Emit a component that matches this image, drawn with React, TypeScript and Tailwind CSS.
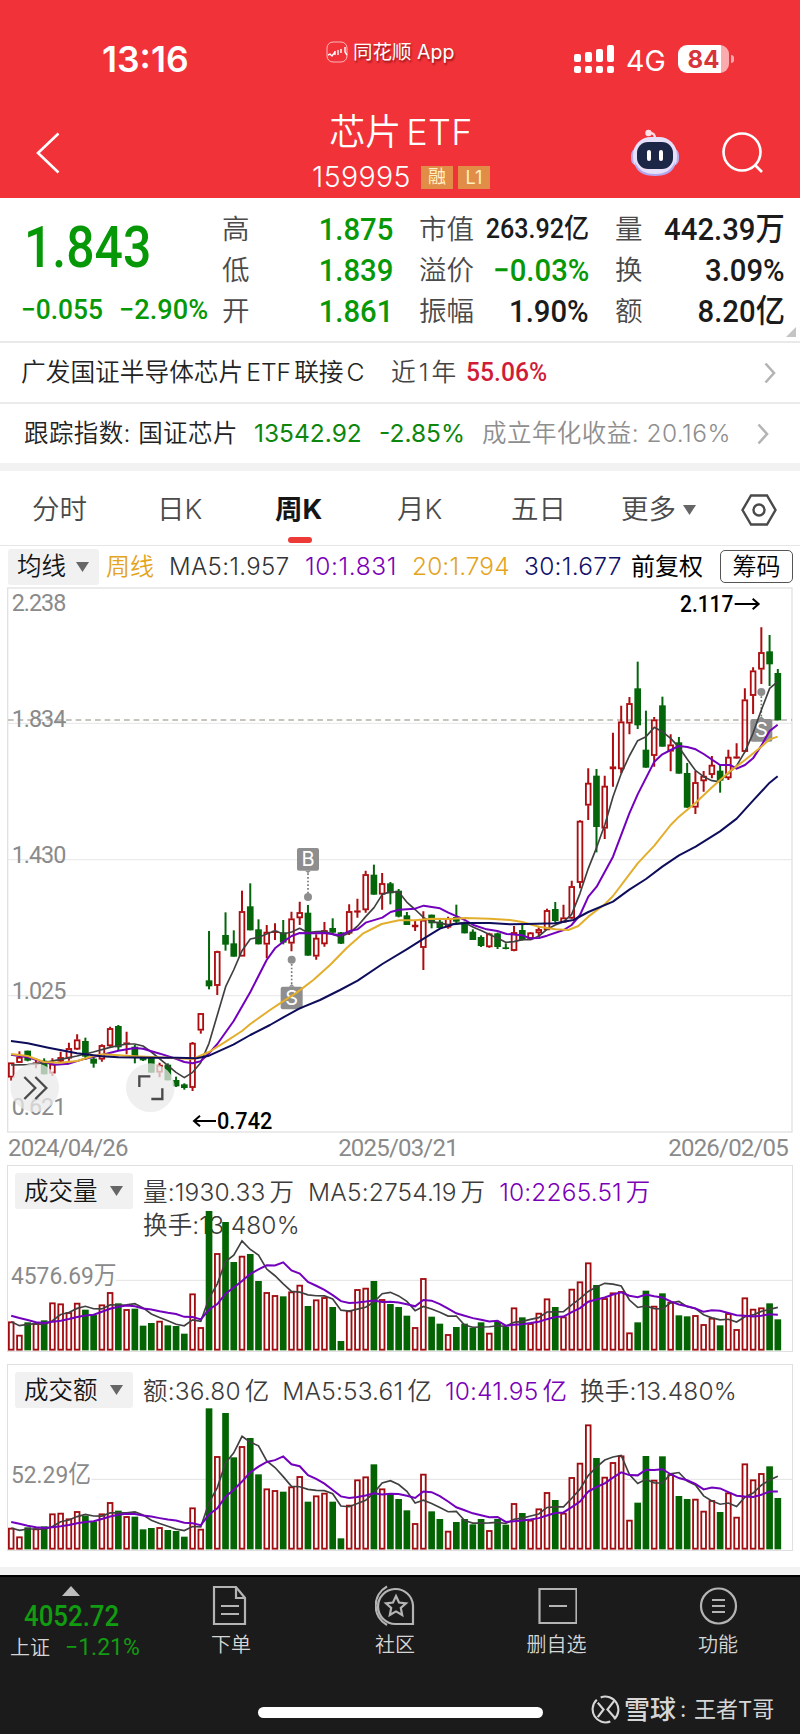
import React from 'react';

type Candle = [high: number, top: number, bottom: number, low: number, up: 0 | 1];

// Plot units are thirds of a pixel; x of the n-th weekly bar.
const barX = (i: number) => 33.6 + i * 24.73;

const CANDLES: Candle[] = [
  [1388, 1388, 1432, 1442, 1], [1354, 1371, 1388, 1388, 1], [1352, 1352, 1382, 1384, 0], [1375, 1388, 1392, 1405, 1],
  [1375, 1382, 1423, 1423, 0], [1375, 1392, 1420, 1428, 1], [1355, 1372, 1384, 1388, 1], [1328, 1345, 1375, 1382, 1],
  [1303, 1319, 1348, 1350, 1], [1313, 1323, 1370, 1380, 0], [1370, 1376, 1391, 1403, 0], [1333, 1336, 1378, 1385, 1],
  [1280, 1285, 1338, 1340, 1], [1275, 1278, 1342, 1352, 0], [1295, 1328, 1333, 1363, 1], [1335, 1340, 1368, 1390, 0],
  [1368, 1372, 1381, 1383, 0], [1372, 1374, 1418, 1418, 0], [1388, 1395, 1417, 1432, 1], [1390, 1394, 1441, 1441, 0],
  [1430, 1440, 1459, 1461, 0], [1450, 1453, 1464, 1469, 0], [1326, 1329, 1463, 1473, 1], [1240, 1240, 1291, 1301, 1],
  [993, 1141, 1159, 1168, 0], [1052, 1054, 1157, 1185, 1], [937, 1005, 1034, 1052, 0], [991, 1030, 1070, 1070, 0],
  [872, 934, 1069, 1069, 1], [850, 919, 991, 991, 0], [958, 988, 1033, 1033, 0], [975, 996, 1033, 1075, 1],
  [970, 993, 997, 1020, 1], [960, 997, 1028, 1033, 0], [935, 956, 1030, 1054, 1], [905, 937, 954, 975, 1],
  [915, 938, 1067, 1067, 0], [1003, 1014, 1069, 1079, 1], [966, 991, 1032, 1040, 1], [955, 984, 998, 1005, 0],
  [996, 997, 1031, 1032, 0], [913, 934, 1000, 1005, 1], [896, 932, 936, 953, 1], [812, 823, 930, 938, 1],
  [794, 824, 884, 884, 0], [819, 850, 883, 929, 1], [846, 850, 880, 913, 0], [867, 872, 950, 952, 0],
  [936, 946, 975, 975, 0], [963, 975, 981, 993, 1], [934, 960, 1043, 1110, 1], [944, 944, 970, 985, 0],
  [954, 965, 984, 986, 0], [950, 955, 982, 986, 1], [914, 951, 965, 970, 0], [965, 968, 1000, 1000, 0],
  [988, 995, 1020, 1020, 0], [1006, 1011, 1038, 1041, 0], [998, 1001, 1041, 1043, 1], [998, 1000, 1041, 1047, 0],
  [1030, 1042, 1047, 1048, 0], [978, 997, 1052, 1054, 1], [972, 990, 1020, 1022, 0], [996, 998, 1016, 1020, 1],
  [982, 988, 999, 1012, 1], [926, 931, 990, 990, 1], [906, 927, 963, 968, 0], [914, 953, 967, 968, 1],
  [842, 859, 955, 957, 1], [661, 663, 848, 865, 1], [505, 549, 616, 660, 1], [507, 527, 681, 757, 0],
  [527, 558, 685, 717, 1], [398, 500, 507, 560, 1], [317, 365, 507, 520, 1], [291, 310, 370, 403, 1],
  [185, 265, 376, 387, 0], [332, 449, 503, 503, 0], [351, 359, 467, 500, 1], [290, 316, 440, 440, 0],
  [403, 434, 454, 514, 1], [411, 427, 521, 521, 0], [489, 519, 623, 623, 0], [513, 547, 622, 642, 1],
  [513, 528, 543, 575, 1], [468, 495, 524, 535, 1], [495, 512, 542, 578, 0], [449, 471, 534, 540, 1],
  [430, 470, 475, 476, 1], [265, 299, 455, 457, 1], [202, 212, 287, 342, 1], [82, 157, 208, 252, 1],
  [105, 154, 193, 258, 0], [207, 219, 361, 361, 0],
];

// Bar tops, measured from the panel's own origin.
const VOLUME = [
  485, 525, 487, 490, 481, 428, 431, 457, 429, 449, 465, 434, 397, 430, 448, 446, 497, 489, 483, 496, 498, 521, 401, 502,
  153, 280, 186, 306, 288, 282, 363, 397, 406, 409, 395, 375, 438, 419, 412, 441, 543, 452, 388, 384, 363, 418, 432, 441,
  467, 502, 355, 470, 491, 523, 501, 491, 503, 487, 519, 486, 500, 443, 472, 490, 459, 416, 441, 470, 387, 365, 308, 375,
  415, 398, 394, 518, 487, 392, 438, 400, 426, 466, 469, 466, 493, 474, 496, 460, 508, 413, 447, 443, 430, 478,
];

const TURNOVER = [
  507, 533, 505, 509, 502, 464, 462, 479, 457, 470, 487, 464, 430, 455, 472, 473, 511, 507, 505, 513, 516, 533, 446, 510,
  148, 292, 162, 295, 262, 237, 346, 389, 394, 398, 383, 352, 428, 410, 402, 428, 538, 438, 362, 353, 316, 389, 405, 420,
  454, 493, 345, 457, 480, 516, 489, 480, 496, 480, 514, 480, 497, 433, 462, 483, 449, 400, 423, 462, 355, 312, 197, 297,
  354, 310, 290, 483, 431, 291, 363, 292, 346, 411, 420, 420, 456, 424, 459, 401, 474, 314, 362, 343, 322, 417,
];

const MA5 =
  '33,1395 83,1394 132,1388 182,1378 231,1368 280,1356 330,1342 380,1332 404,1332 429,1338 454,1356 503,1396 528,1417 553,1433 578,1417 602,1388 627,1330 652,1245 677,1160 701,1110 726,1052 751,1017 776,1012 800,1002 825,992 850,1002 875,996 899,985 924,998 950,995 974,994 998,1003 1020,1010 1047,1000 1073,978 1097,950 1122,923 1147,883 1172,875 1197,877 1222,908 1247,930 1271,953 1295,964 1320,970 1345,974 1370,970 1395,968 1420,982 1445,992 1470,1004 1492,1014 1517,1027 1542,1025 1567,1019 1592,1019 1617,1008 1641,988 1666,975 1691,965 1715,943 1740,880 1765,805 1790,742 1815,673 1839,590 1864,520 1888,468 1913,422 1938,410 1963,382 1987,395 2012,415 2037,442 2062,478 2087,512 2111,530 2136,542 2156,545 2185,520 2210,497 2235,455 2259,400 2284,330 2309,265 2333,245';
const MA10 =
  '33,1364 83,1372 120,1383 165,1394 207,1391 256,1376 305,1365 355,1352 404,1344 429,1346 480,1361 530,1377 553,1386 578,1390 602,1384 627,1360 652,1332 701,1263 751,1176 800,1080 825,1045 850,1025 875,1008 899,999 930,1000 974,999 1020,1006 1047,994 1073,988 1097,968 1147,953 1172,936 1197,929 1245,926 1271,917 1320,925 1345,938 1395,960 1420,975 1460,988 1492,993 1520,1002 1567,1006 1592,1015 1617,1014 1641,1007 1691,990 1715,975 1740,945 1765,890 1790,860 1839,770 1888,640 1913,583 1963,485 1987,463 2012,450 2037,438 2062,441 2087,448 2111,462 2160,495 2190,495 2210,506 2235,495 2259,475 2284,437 2309,393 2333,374';
const MA20 =
  '33,1362 83,1368 132,1386 182,1388 231,1383 280,1368 310,1363 355,1366 404,1369 454,1371 504,1373 578,1377 627,1356 677,1325 726,1293 751,1272 810,1230 840,1210 890,1178 940,1140 990,1095 1040,1044 1090,1000 1145,972 1197,961 1245,961 1295,956 1350,957 1395,954 1470,956 1530,960 1567,966 1617,980 1666,988 1705,990 1735,978 1765,950 1815,912 1839,888 1913,790 1963,737 2012,675 2037,650 2087,608 2136,562 2185,518 2235,480 2284,440 2309,418 2333,410';
const MA30 =
  '33,1323 83,1330 145,1343 231,1360 305,1369 355,1372 454,1373 528,1373 590,1375 627,1367 700,1334 751,1305 810,1275 850,1252 899,1225 960,1200 1020,1170 1073,1142 1147,1092 1220,1048 1271,1016 1320,986 1360,973 1400,969 1470,969 1530,973 1580,972 1666,970 1720,960 1765,936 1839,905 1888,869 1938,837 1987,800 2037,766 2087,740 2160,694 2210,656 2259,602 2309,548 2333,529';

const CJK = "font-[Inter,'Noto_Sans_CJK_SC',sans-serif]";
const DIN = "font-[Roboto,'Noto_Sans_CJK_SC',sans-serif]";

function movingAverage(tops: number[], n: number, lead: number[]) {
  return tops
    .map((_, i) => {
      const y = i < n - 1 ? lead[i] : tops.slice(i - n + 1, i + 1).reduce((a, b) => a + b, 0) / n;
      return `${barX(i).toFixed(1)},${y.toFixed(1)}`;
    })
    .join(' ');
}

const Caret: React.FC = () => (
  <svg viewBox="0 0 13 10" className="h-2.5 w-[13px] shrink-0">
    <path d="M0 0h13L6.5 10z" fill="#666" />
  </svg>
);

const ChevronRight: React.FC = () => (
  <svg viewBox="0 0 12 22" className="h-[22px] w-3 shrink-0" fill="none" stroke="#b4b4b4" strokeWidth="2.6">
    <path d="M1.5 1.5l8.5 9.5-8.5 9.5" />
  </svg>
);

const StatusBar: React.FC = () => (
  <div className="flex h-[96px] items-start text-white">
    <div className="ml-[102px] mt-[39px] w-[224px] text-[35.5px] font-semibold leading-[42px]">13:16</div>
    <div className="mt-[38px] flex h-7 w-[248px] items-center gap-[5px] text-[19.5px] [text-shadow:1px_2px_2px_rgba(90,0,0,0.6)]">
      <svg viewBox="0 0 22 22" className="size-[22px]" fill="none" stroke="#fff">
        <rect x="1" y="1" width="20" height="20" rx="6" strokeOpacity=".65" />
        <path d="M2 14l2-1 2 2 3-4M9 10v4M12 9v5M15 8v4M19 6v5l2 3" strokeWidth="1.4" />
      </svg>
      <span className="whitespace-nowrap pt-0.5">同花顺 App</span>
    </div>
    <svg viewBox="0 0 40 28" className="mt-[45px] h-7 w-10" fill="#fff">
      {[9, 7, 4, 0].map((y, i) => (
        <g key={y}>
          <rect x={i * 11} y={y} width="7" height={17 - y} rx="2" />
          <rect x={i * 11} y="21" width="7" height="7" rx="2" />
        </g>
      ))}
    </svg>
    <div className="ml-3 mt-10 w-10 text-[28.5px] leading-[42px]">4G</div>
    <div className="ml-3 mt-[45px] h-7 w-[51px] rounded-[9px] bg-[linear-gradient(90deg,#fff_84%,#fbabae_84%)] text-center text-[24px] font-bold leading-[29px] text-[#d8343b]">
      84
    </div>
    <div className="ml-0.5 mt-[55px] h-2 w-[3px] rounded-r bg-[#fbabae]" />
  </div>
);

const TitleBar: React.FC = () => (
  <div className="flex h-[102px] items-start text-white">
    <svg viewBox="0 0 24 42" className="ml-9 mt-9 h-[42px] w-6" fill="none" stroke="#fff" strokeWidth="2.6">
      <path d="M22.5 1.5L2 21l20.5 19.5" />
    </svg>
    <div className="ml-[251px] flex w-[180px] flex-col items-center">
      <div className="mt-[13px] flex gap-[5px] whitespace-nowrap text-[36px] font-[350] leading-[46px]">
        <span>芯片</span>
        <span className="tracking-[0.4px]">ETF</span>
      </div>
      <div className="mt-2 flex h-7 items-center whitespace-nowrap">
        <span className="text-[28.5px] font-[350] leading-7 tracking-[0.4px]">159995</span>
        <span className="ml-2.5 h-[23px] w-8 bg-[#e28d47] text-center text-[18px] leading-[22px] text-[#fff0c4]">融</span>
        <span className="ml-[5px] h-[23px] w-8 bg-[#e28d47] text-center text-[18px] leading-[23px] text-[#fff0c4]">L1</span>
      </div>
    </div>
    <svg viewBox="0 0 50 48" className="ml-[139px] mt-[33px] h-12 w-[50px]">
      <path d="M25 10c0-5-2-6-5-6" stroke="#ffd9e2" strokeWidth="2.5" fill="none" />
      <circle cx="18.5" cy="4" r="3.2" fill="#ffe2e8" />
      <rect x="1" y="19" width="48" height="18" rx="7" fill="#b7aef0" />
      <rect x="3" y="8" width="44" height="38" rx="18" fill="#e6e0fb" />
      <path d="M5 33c4 9 11 12 20 12s16-3 20-12c0 10-9 14-20 14S5 43 5 33z" fill="#b3a8ef" />
      <rect x="7" y="13" width="36" height="27" rx="11" fill="#1c2747" />
      <rect x="17" y="21" width="4" height="11" rx="2" fill="#fff" />
      <rect x="29" y="21" width="4" height="11" rx="2" fill="#fff" />
    </svg>
    <svg viewBox="0 0 42 42" className="ml-[42px] mt-9 size-[42px]" fill="none" stroke="#fff" strokeWidth="2.6">
      <circle cx="20" cy="20" r="18.5" />
      <path d="M33 33l7 7" />
    </svg>
  </div>
);

type Stat = { label: string; value: string; color?: string; small?: boolean };

const StatColumn: React.FC<{ className: string; rows: Stat[] }> = ({ className, rows }) => (
  <dl className={`flex flex-col pt-[11px] ${className}`}>
    {rows.map(({ label, value, color, small }) => (
      <div key={label} className="flex h-[41px] items-center justify-between whitespace-nowrap">
        <dt className="text-[27.5px] font-[350] text-[#4a4a4a]">{label}</dt>
        <dd
          className={`${DIN} origin-right scale-x-[0.93] font-medium ${small ? 'text-[27px]' : 'text-[31.5px]'} ${color ?? 'text-[#1b1b1b]'}`}
        >
          {value}
        </dd>
      </div>
    ))}
  </dl>
);

const Quote: React.FC = () => (
  <section className="relative flex h-[145px] border-b-2 border-[#e9e9e9]">
    <div className={`${DIN} w-[222px] whitespace-nowrap font-medium text-[#069806]`}>
      <div className="ml-[24px] mt-[19px] h-[60px] origin-left scale-x-[0.86] text-[58px] leading-[60px]">1.843</div>
      <div className="ml-[21px] mt-[17px] flex h-8 text-[28px] leading-8">
        <span className="w-[98px] origin-left scale-x-[0.94]">−0.055</span>
        <span className="origin-left scale-x-[0.97]">−2.90%</span>
      </div>
    </div>
    <StatColumn
      className="w-[171px]"
      rows={[
        { label: '高', value: '1.875', color: 'text-[#069806]' },
        { label: '低', value: '1.839', color: 'text-[#069806]' },
        { label: '开', value: '1.861', color: 'text-[#069806]' },
      ]}
    />
    <StatColumn
      className="ml-[26px] w-[170px]"
      rows={[
        { label: '市值', value: '263.92亿', small: true },
        { label: '溢价', value: '−0.03%', color: 'text-[#069806]' },
        { label: '振幅', value: '1.90%' },
      ]}
    />
    <StatColumn
      className="ml-[26px] w-[170px]"
      rows={[
        { label: '量', value: '442.39万' },
        { label: '换', value: '3.09%' },
        { label: '额', value: '8.20亿' },
      ]}
    />
    <svg viewBox="0 0 10 10" className="absolute bottom-1 right-1 size-2.5">
      <path d="M10 0v10H0z" fill="#c4c4c4" />
    </svg>
  </section>
);

const LinkRows: React.FC = () => (
  <>
    <div className="flex h-[61px] items-center whitespace-nowrap border-b-2 border-[#ebebeb] pl-[21px] pr-6 text-[24.7px] font-[350] text-[#222]">
      <span className="flex w-[370px] gap-[3px]">
        <span>广发国证半导体芯片</span>
        <span>ETF</span>
        <span>联接</span>
        <span>C</span>
      </span>
      <span className="flex w-[75px] gap-[3px] text-[#444]">
        <span>近</span>
        <span>1</span>
        <span>年</span>
      </span>
      <span className={`${DIN} flex-1 origin-left scale-x-[0.95] text-[26px] font-medium text-[#d01c38]`}>55.06%</span>
      <ChevronRight />
    </div>
    <div className="flex h-[59px] items-center whitespace-nowrap pl-6 pr-[31px] text-[24.5px] font-[350] text-[#222]">
      <span className="w-[230px] tracking-[0.4px]">跟踪指数: 国证芯片</span>
      <span className="w-[125px] font-normal text-[#0c860c]">13542.92</span>
      <span className="w-[103px] font-normal text-[#0c860c]">-2.85%</span>
      <span className="flex-1 tracking-[0.45px] text-[#8e8e8e]">成立年化收益: 20.16%</span>
      <ChevronRight />
    </div>
    <div className="h-2 bg-[#f2f2f2]" />
  </>
);

const Tabs: React.FC = () => (
  <nav className="flex h-[75px] items-center border-b border-[#e6e6e6] pt-[3px] text-[27.5px] font-[350] text-[#4a4a4a]">
    <span className="ml-8 w-[125px]">分时</span>
    <span className="w-[118px]">日K</span>
    <span className="relative w-[122px] font-bold text-[#151515]">
      周K
      <i className="absolute -bottom-[13px] left-[13px] h-[6px] w-6 rounded-sm bg-[#ec3a37]" />
    </span>
    <span className="w-[114px]">月K</span>
    <span className="w-[110px]">五日</span>
    <span className="flex w-[120px] items-center gap-[7px]">
      更多
      <Caret />
    </span>
    <svg viewBox="0 0 36 32" className="h-8 w-9" fill="none" stroke="#4a4a4a" strokeWidth="2.4">
      <path d="M10 1.5h16L34.5 16 26 30.5H10L1.5 16z" />
      <circle cx="18" cy="16" r="5.5" />
    </svg>
  </nav>
);

const DropButton: React.FC<{ label: string; className: string }> = ({ label, className }) => (
  <button
    className={`flex shrink-0 items-center justify-between rounded-[3px] bg-[#f1f1f1] pl-[9px] pr-2.5 text-[24.5px] font-[350] text-[#151515] ${className}`}
  >
    {label}
    <Caret />
  </button>
);

const MaLegend: React.FC = () => (
  <div className="flex h-[41px] items-center whitespace-nowrap pl-2 text-[24px] font-[350]">
    <DropButton label="均线" className="h-9 w-[91px]" />
    <span className="ml-[7px] w-[63px] text-[#e4a41c]">周线</span>
    <span className="w-[136px] tracking-[0.4px] text-[#333]">MA5:1.957</span>
    <span className="w-[107px] text-[24.5px] tracking-[0.6px] text-[#7a00b8]">10:1.831</span>
    <span className="w-[112px] text-[24.5px] tracking-[0.1px] text-[#e4a41c]">20:1.794</span>
    <span className="w-[107px] text-[24.5px] tracking-[0.3px] text-[#10106a]">30:1.677</span>
    <span className="w-[89px] font-normal text-black">前复权</span>
    <span className="flex h-[33px] w-[73px] items-center justify-center rounded-[5px] border-[1.5px] border-[#555] text-black">筹码</span>
  </div>
);

const Marker: React.FC<{ x: number; box: number; dot: number; label: string }> = ({ x, box, dot, label }) => {
  const edge = dot > box ? box + 68 : box;
  const tip = dot > box ? edge + 8 : edge - 8;
  return (
    <g>
      <rect x={x - 33} y={box} width="66" height="68" rx="6" fill="#8e8e8e" />
      <path d={`M${x - 9} ${edge}H${x + 9}L${x} ${tip}z`} fill="#8e8e8e" />
      <path d={`M${x} ${tip}V${dot}`} stroke="#777" strokeWidth="5" strokeDasharray="5 6" />
      <circle cx={x} cy={dot} r="12" fill="#8e8e8e" />
      <text x={x} y={box + 55} textAnchor="middle" fontSize="60" fill="#fff" fontFamily="Inter">{label}</text>
    </g>
  );
};

const AXIS = [
  { y: 9, label: '2.238' },
  { y: 356, label: '1.834' },
  { y: 764, label: '1.430' },
  { y: 1173, label: '1.025' },
  { y: 1521, label: '0.621' },
];

const PriceChart: React.FC = () => (
  <svg viewBox="0 -39 2400 1644" className="block h-[548px] w-[800px]" fill="none">
    <rect x="23" y="-36" width="2353" height="1632" stroke="#e2e2e2" strokeWidth="4" />
    <path d="M24 370H2376M24 779H2376M24 1187H2376" stroke="#e6e6e6" strokeWidth="3" />
    <path d="M24 360H2376" stroke="#b5b0a8" strokeWidth="4" strokeDasharray="17 12" />
    <g fontFamily="Roboto" fontSize="70" fill="#8a8a8a">
      {AXIS.map(({ y, label }) => (
        <text key={label} x="35" y={y + 25} textLength="164">{label}</text>
      ))}
    </g>
    <Marker x={924} box={744} dot={891} label="B" />
    <Marker x={875} box={1160} dot={1079} label="S" />
    <Marker x={2284} box={357} dot={276} label="S" />
    {CANDLES.map(([high, top, bottom, low, up], i) => {
      const x = barX(i);
      return up ? (
        <g key={i} stroke="#ad0c10">
          <path d={`M${x} ${high}V${top}M${x} ${bottom}V${low}`} strokeWidth="6" />
          <rect x={x - 7} y={top + 2} width="14" height={Math.max(bottom - top - 4, 1)} strokeWidth="5.5" />
        </g>
      ) : (
        <g key={i}>
          <path d={`M${x} ${high}V${low}`} stroke="#04650a" strokeWidth="6" />
          <rect x={x - 10} y={top} width="20" height={bottom - top} fill="#04650a" />
        </g>
      );
    })}
    <g strokeWidth="6" strokeLinejoin="round">
      <polyline points={MA5} stroke="#404040" strokeWidth="5" />
      <polyline points={MA10} stroke="#7300bd" />
      <polyline points={MA20} stroke="#e3ae2b" />
      <polyline points={MA30} stroke="#0d0d5c" />
    </g>
    <g stroke="#4a4a4a" strokeWidth="7">
      <circle cx="104" cy="1463" r="73" fill="#e9e9e9" fillOpacity=".75" stroke="none" />
      <path d="M73 1431l33 33-33 33M106 1431l33 33-33 33" />
      <circle cx="451" cy="1463" r="73" fill="#e9e9e9" fillOpacity=".75" stroke="none" />
      <path d="M418 1461v-32h33M487 1465v32h-33" />
    </g>
    <g fontFamily="Roboto" fontSize="70" fontWeight="500" fill="#000">
      <text x="2040" y="37" textLength="160" lengthAdjust="spacingAndGlyphs">2.117</text>
      <text x="651" y="1588" textLength="166" lengthAdjust="spacingAndGlyphs">0.742</text>
    </g>
    <path d="M2204 12h72M2258-4l18 16-18 16M648 1563h-66M600 1547l-18 16 18 16" stroke="#000" strokeWidth="6" />
  </svg>
);

type BarPlotProps = { tops: number[]; base: number; gridX: number; gridY: number; lead5: number[]; lead10: number[] };

const BarPlot: React.FC<BarPlotProps> = ({ tops, base, gridX, gridY, lead5, lead10 }) => (
  <svg viewBox="24 15 2352 558" className="absolute -top-px left-0 h-[186px] w-[784px]" fill="none">
    <path d={`M${gridX} ${gridY}H2376`} stroke="#e2e2e2" strokeWidth="3" />
    {tops.map((top, i) =>
      CANDLES[i][4] ? (
        <rect key={i} x={barX(i) - 7} y={top + 2} width="14" height={base - top - 4} fill="#fff" stroke="#a00c10" strokeWidth="5.5" />
      ) : (
        <rect key={i} x={barX(i) - 10} y={top} width="20" height={base - top} fill="#046404" />
      ),
    )}
    <polyline points={movingAverage(tops, 5, lead5)} stroke="#404040" strokeWidth="5" />
    <polyline points={movingAverage(tops, 10, lead10)} stroke="#7300bd" strokeWidth="6" />
  </svg>
);

const SubChart: React.FC<{ title: string; axis: string; legend: React.ReactNode; children: React.ReactNode }> = ({
  title,
  axis,
  legend,
  children,
}) => (
  <section className="relative ml-[7px] h-[187px] w-[786px] border border-[#e0e0e0]">
    <div className="flex pl-[7px] pt-[7px]">
      <DropButton label={title} className="h-9 w-[118px]" />
      <div className="ml-2.5 w-[640px] pt-[3px] text-[24.5px] font-[350] leading-[33px] tracking-[0.15px] text-[#3c3c3c]">{legend}</div>
    </div>
    <div className={`${DIN} absolute left-[3px] top-[94px] origin-left scale-x-[0.93] text-[24.5px] leading-8 text-[#8a8a8a]`}>
      {axis}
    </div>
    {children}
  </section>
);

const Amount: React.FC<{ value: string; unit: string; className?: string }> = ({ value, unit, className }) => (
  <span className={`flex gap-1 ${className ?? ''}`}>
    <span>{value}</span>
    <span>{unit}</span>
  </span>
);

const TABS = [
  {
    label: '下单',
    width: 'w-[168px]',
    icon: <path d="M3 2h22l9 11v26H3zM25 2v11h9M10 21h18M10 29h18" />,
  },
  {
    label: '社区',
    width: 'w-[160px]',
    icon: (
      <>
        <path d="M38 39V20.5A17.5 17.5 0 1 0 20.5 39zM12 1.5a22 22 0 0 0 0 38.5" />
        <path d="M21 11l3 6.5 7 .8-5.2 4.7 1.4 7-6.2-3.6-6.2 3.6 1.4-7L11 18.300l7-.8z" />
      </>
    ),
  },
  {
    label: '删自选',
    width: 'w-[163px]',
    icon: <path d="M3.5 4h37v34h-37zM13 21h18" />,
  },
  {
    label: '功能',
    width: 'w-[160px]',
    icon: (
      <>
        <circle cx="20.5" cy="21" r="17.5" />
        <path d="M14 15h13M14 21h13M14 27h13" />
      </>
    ),
  },
];

const Footer: React.FC = () => (
  <footer className="h-[159px] border-t-2 border-black bg-[#1b1b1b] text-[#d6d6d6]">
    <div className="flex h-[118px]">
      <div className="w-[147px] whitespace-nowrap">
        <svg viewBox="0 0 18 10" className="ml-[62px] mt-[9px] h-2.5 w-[18px]">
          <path d="M9 0l9 10H0z" fill="#bdbdbd" />
        </svg>
        <div className={`${DIN} ml-[24px] mt-[5px] h-[30px] origin-left scale-x-[0.89] text-[29px] font-medium leading-[30px] text-[#119c11]`}>
          4052.72
        </div>
        <div className="ml-2.5 mt-[2px] flex h-[30px] items-center text-[20px]">
          <span className="w-[55px] font-[350]">上证</span>
          <span className={`${DIN} text-[23px] text-[#119c11]`}>−1.21%</span>
        </div>
      </div>
      {TABS.map(({ label, width, icon }) => (
        <div key={label} className={`flex flex-col items-center pt-2 ${width}`}>
          <svg viewBox="0 0 41 42" className="h-[42px] w-[41px]" fill="none" stroke="#b4b4b4" strokeWidth="2.2">
            {icon}
          </svg>
          <span className="mt-1 text-[20px] font-[350] leading-7">{label}</span>
        </div>
      ))}
    </div>
    <div className="flex h-7 items-center">
      <div className="ml-[258px] mt-1.5 h-[11px] w-[285px] rounded-full bg-white" />
      <svg viewBox="0 0 30 30" className="ml-12 size-[29px] shrink-0" fill="none" stroke="#d6d6d6" strokeWidth="2.2">
        <path d="M10 2.5A13.5 13.5 0 0 1 24 25M20 27.5A13.5 13.5 0 0 1 6 5" />
        <path d="M7 8l6 7-6 8M24 6l-7 9 8 9" />
      </svg>
      <span className="ml-1 flex items-center whitespace-nowrap">
        <span className="w-[56px] text-[26px] font-medium">雪球</span>
        <span className="w-3.5 text-[22px]">:</span>
        <span className="text-[22px]">王者T哥</span>
      </span>
    </div>
  </footer>
);

export default function App() {
  return (
    <main className={`${CJK} h-[1734px] w-[800px] overflow-hidden bg-white`}>
      <header className="h-[198px] bg-[#f13239]">
        <StatusBar />
        <TitleBar />
      </header>
      <Quote />
      <LinkRows />
      <Tabs />
      <MaLegend />
      <PriceChart />
      <div className={`${DIN} flex h-[30px] justify-between pl-2 pr-3 text-[24px] leading-[27px] tracking-[-0.8px] text-[#8a8a8a]`}>
        <span>2024/04/26</span>
        <span>2025/03/21</span>
        <span>2026/02/05</span>
      </div>
      <SubChart
        title="成交量"
        axis="4576.69万"
        legend={
          <>
            <div className="flex gap-3.5 whitespace-nowrap">
              <Amount value="量:1930.33" unit="万" />
              <Amount value="MA5:2754.19" unit="万" />
              <Amount value="10:2265.51" unit="万" className="text-[#7a00b8]" />
            </div>
            <div>换手:13.480%</div>
          </>
        }
      >
        <BarPlot
          tops={VOLUME}
          base={571}
          gridX={348}
          gridY={361}
          lead5={[485, 497, 493, 491]}
          lead10={[467, 474, 480, 487, 489, 485, 482, 477, 471]}
        />
      </SubChart>
      <div className="h-3" />
      <SubChart
        title="成交额"
        axis="52.29亿"
        legend={
          <div className="flex gap-[13px] whitespace-nowrap">
            <Amount value="额:36.80" unit="亿" />
            <Amount value="MA5:53.61" unit="亿" />
            <Amount value="10:41.95" unit="亿" className="text-[#7a00b8]" />
            <span>换手:13.480%</span>
          </div>
        }
      >
        <BarPlot
          tops={TURNOVER}
          base={571}
          gridX={275}
          gridY={361}
          lead5={[507, 514, 510, 510]}
          lead10={[489, 494, 500, 505, 507, 505, 502, 498, 493]}
        />
      </SubChart>
      <div className="h-4" />
      <div className="h-2 bg-[#f2f2f2]" />
      <Footer />
    </main>
  );
}
